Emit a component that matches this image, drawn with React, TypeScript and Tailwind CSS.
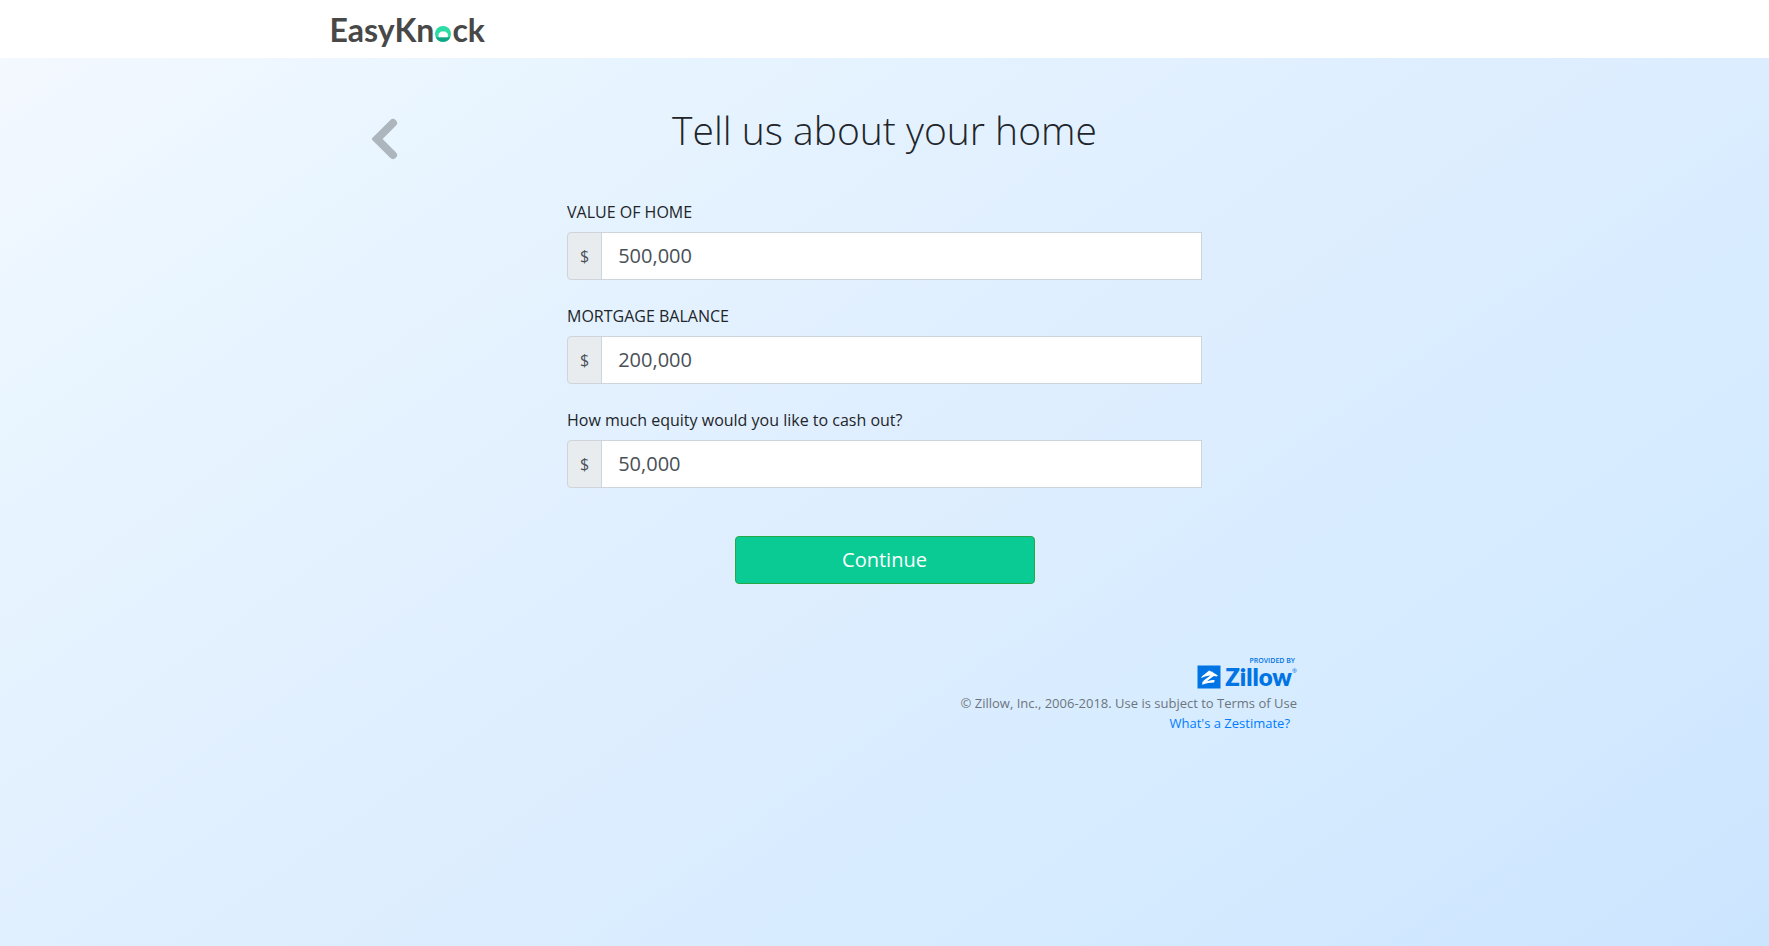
import React from "react";

type MoneyFieldProps = { id: string; label: string; value: string };

function MoneyField({ id, label, value }: MoneyFieldProps) {
  return (
    <div className="mb-6">
      <label htmlFor={id} className="mb-2 block text-base leading-6">
        {label}
      </label>
      <div className="flex h-12">
        <span className="flex items-center rounded-l border border-[#ced4da] bg-[#e9ecef] px-3 text-base text-[#495057]">
          $
        </span>
        <input
          id={id}
          type="text"
          inputMode="numeric"
          defaultValue={value}
          className="-ml-px min-w-0 flex-1 border border-[#ced4da] bg-white px-4 text-xl text-[#495057] outline-none"
        />
      </div>
    </div>
  );
}

function Logo() {
  return (
    <a
      href="#"
      aria-label="EasyKnock"
      className="flex items-baseline font-['Lato',sans-serif] text-[32px] leading-[60px] font-bold text-[#484848]"
    >
      <span>EasyKn</span>
      <svg viewBox="0 0 16 16" className="mx-px h-4 w-4" aria-hidden="true">
        <circle cx="8" cy="8" r="8" fill="#2bdca4" />
        <path d="M0.8 11.2h14.4A8 8 0 0 1 0.8 11.2z" fill="#12a583" />
        <path d="M6 5.4h4.4L12.8 7.8V11.2H3.6V7.8z" fill="#fff" />
      </svg>
      <span>ck</span>
    </a>
  );
}

function ZillowLogo() {
  return (
    <a href="#" className="flex flex-col items-end text-[#0074e4]">
      <span className="pr-0.5 text-[7px] leading-2 font-semibold">PROVIDED BY</span>
      <span className="flex h-6 items-center gap-1">
        <svg viewBox="0 0 24 24" className="h-6 w-6" aria-hidden="true">
          <rect x="0.5" y="0.5" width="23" height="23" fill="#0074e4" />
          <path
            d="M12.2 5.4 14.6 6.8 15.2 6.4 16 7.6 21 10.6 19.6 11.4 17 11C14.2 12.8 11.8 14.6 10 16.3 12.8 15.3 15 14.9 17.6 14.9L17.2 17.6C12.8 17.6 9.2 18.4 5.2 19.8L5.4 17C8.2 14.4 10.4 12.4 13.6 10.6 10.4 10.8 7.6 11.6 4 13.2L5 11.2z"
            fill="#fff"
          />
        </svg>
        <span className="flex items-start leading-6">
          <span className="font-['Lato',sans-serif] text-2xl leading-6 font-extrabold">
            Zillow
          </span>
          <span className="text-[6px] leading-3">®</span>
        </span>
      </span>
    </a>
  );
}

export default function App() {
  return (
    <div className="flex min-h-screen flex-col font-['Open_Sans',sans-serif] text-[#212529]">
      <header className="h-[58px] bg-white">
        <div className="mx-auto max-w-[1140px] px-[15px]">
          <Logo />
        </div>
      </header>
      <main className="flex-1 bg-[linear-gradient(145deg,#f4f8ff_0%,#e8f5ff_19%,#dfeeff_48%,#d7ecff_70%,#cce5ff_100%)]">
        <div className="mx-auto grid max-w-[1140px] grid-cols-12 pt-12">
          <div className="col-span-2 pt-3 pl-[57px]">
            <button type="button" aria-label="Back" className="block cursor-pointer">
              <svg viewBox="0 0 26 44" className="h-11 w-[26px]" aria-hidden="true">
                <path
                  d="M21 5 5 21 21 37"
                  fill="none"
                  stroke="#adb5bd"
                  strokeWidth="8"
                  strokeLinecap="round"
                />
              </svg>
            </button>
          </div>
          <h1 className="col-span-8 text-center text-[39px] leading-[48px] font-light">
            Tell us about your home
          </h1>
        </div>
        <form className="mx-auto mt-[38px] max-w-[635px]">
          <MoneyField id="home-value" label="VALUE OF HOME" value="500,000" />
          <MoneyField id="mortgage" label="MORTGAGE BALANCE" value="200,000" />
          <MoneyField
            id="equity"
            label="How much equity would you like to cash out?"
            value="50,000"
          />
          <button
            type="button"
            className="mx-auto mt-12 block h-12 w-[300px] rounded border border-[#28a745] bg-[#0acb94] text-xl font-medium text-white"
          >
            Continue
          </button>
        </form>
        <div className="mx-auto mt-[73px] flex max-w-[825px] flex-col items-end text-[13px] leading-5">
          <ZillowLogo />
          <p className="mt-1 text-[#6c757d]">
            © Zillow, Inc., 2006-2018. Use is subject to Terms of Use
          </p>
          <a href="#" className="pr-[7px] text-[#007bff]">
            What's a Zestimate?
          </a>
        </div>
      </main>
    </div>
  );
}
